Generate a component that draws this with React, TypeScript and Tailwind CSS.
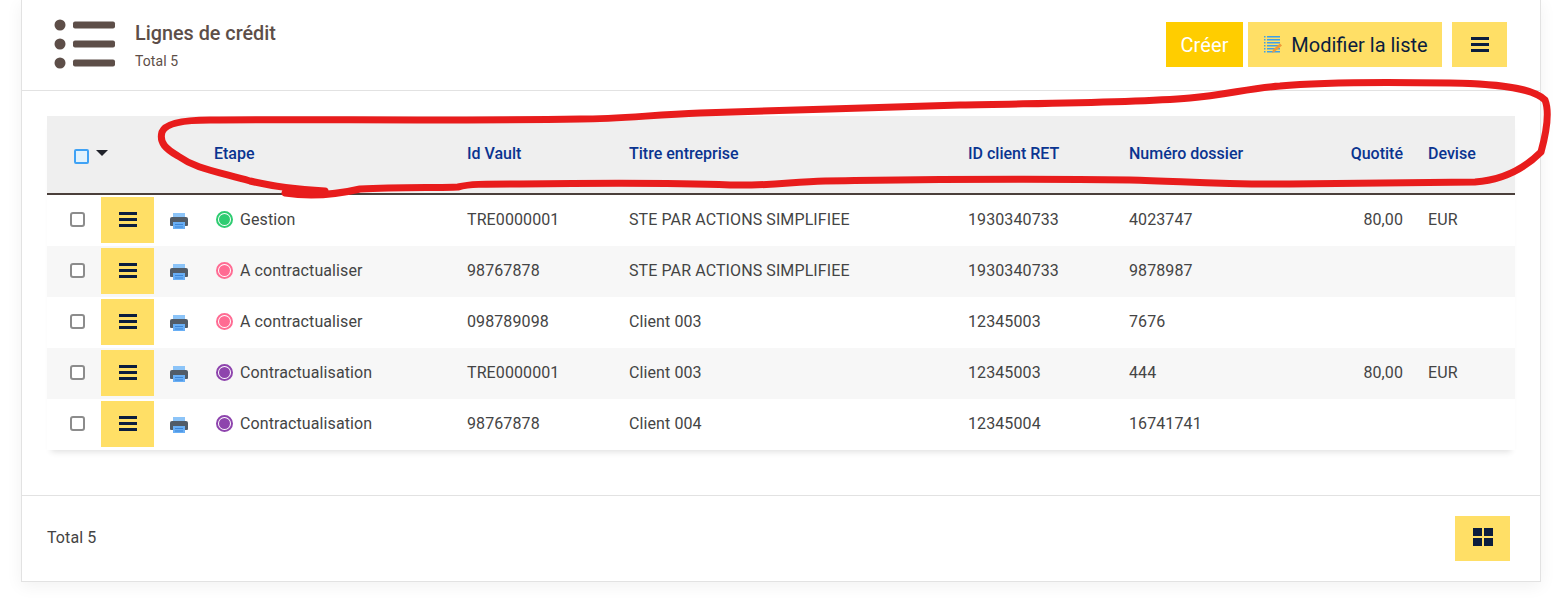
const rows = [
  { s: "Gestion", c: "#2ecc71", v: "TRE0000001", t: "STE PAR ACTIONS SIMPLIFIEE", i: "1930340733", n: "4023747", q: "80,00", d: "EUR" },
  { s: "A contractualiser", c: "#ff6b93", v: "98767878", t: "STE PAR ACTIONS SIMPLIFIEE", i: "1930340733", n: "9878987", q: "", d: "" },
  { s: "A contractualiser", c: "#ff6b93", v: "098789098", t: "Client 003", i: "12345003", n: "7676", q: "", d: "" },
  { s: "Contractualisation", c: "#8e44ad", v: "TRE0000001", t: "Client 003", i: "12345003", n: "444", q: "80,00", d: "EUR" },
  { s: "Contractualisation", c: "#8e44ad", v: "98767878", t: "Client 004", i: "12345004", n: "16741741", q: "", d: "" },
];

function Bars() {
  return (
    <svg width="18" height="15" viewBox="0 0 18 15" className="block">
      <rect x="0" y="0" width="18" height="3" fill="#0b1d3e" />
      <rect x="0" y="6" width="18" height="3" fill="#0b1d3e" />
      <rect x="0" y="12" width="18" height="3" fill="#0b1d3e" />
    </svg>
  );
}

function Printer() {
  return (
    <svg width="18" height="16" viewBox="0 0 18 16" className="block">
      <rect x="3" y="0" width="12" height="5" fill="#8cc4f8" />
      <path d="M2 4h14a2 2 0 0 1 2 2v6a1 1 0 0 1-1 1H1a1 1 0 0 1-1-1V6a2 2 0 0 1 2-2z" fill="#515c68" />
      <rect x="3" y="9" width="12" height="7" fill="#69aff5" />
      <rect x="5" y="11" width="8" height="1" fill="#3d86d8" />
      <rect x="5" y="13.5" width="8" height="1" fill="#3d86d8" />
    </svg>
  );
}

function Logo() {
  return (
    <svg width="62" height="50" viewBox="0 0 62 50" className="block">
      {[6, 25, 44].map((y) => (
        <g key={y}>
          <circle cx="6" cy={y} r="5.5" fill="#5d4e48" />
          <rect x="19" y={y - 3.5} width="42" height="7" rx="2" fill="#5d4e48" />
        </g>
      ))}
    </svg>
  );
}

function EditList() {
  return (
    <svg width="18" height="19" viewBox="0 0 18 19" className="block">
      {[1, 4, 7, 10, 13, 16].map((y) => (
        <g key={y}>
          <rect x="0" y={y} width="1.5" height="1.5" fill="#3fa0e8" />
          <rect x="3" y={y} width="13" height="1.5" fill="#3fa0e8" />
        </g>
      ))}
      <path d="M8 18l1-3.5 7-6 2 2-7 6z" fill="#f09a36" />
    </svg>
  );
}

function Status({ color }: { color: string }) {
  return (
    <span
      className="flex h-[17px] w-[17px] shrink-0 items-center justify-center rounded-full border-2 bg-white"
      style={{ borderColor: color }}
    >
      <span className="h-[11px] w-[11px] rounded-full" style={{ backgroundColor: color }} />
    </span>
  );
}

function Annotation() {
  return (
    <svg width="1553" height="200" viewBox="0 0 1553 200" className="pointer-events-none absolute left-0 top-0" fill="none">
      <path
        d="M285 193C305 196 330 196 360 189C400 187 440 188 458 187C470 184 480 184 520 184C600 183 680 183 730 185C770 186 790 182 825 181C900 180 1000 178 1130 180C1180 181 1220 185 1290 184C1360 183 1420 183 1475 182C1505 180 1525 168 1541 152C1547 130 1549 110 1545 100C1535 90 1510 84 1450 83C1390 82 1320 82 1280 86C1250 88 1225 95 1190 98C1130 103 1060 103 960 105C880 108 780 110 700 113C650 115 620 119 580 119C450 121 300 119 210 120C180 120 165 124 162 132C159 143 166 149 178 156C195 168 210 170 250 181C270 186 290 189 325 191"
        stroke="#e81c1c"
        strokeWidth="7"
        strokeLinecap="round"
        strokeLinejoin="round"
      />
    </svg>
  );
}

const th = "border-b-2 border-[#4a3f3b] pb-[1px] font-medium";

export default function App() {
  return (
    <div className="relative h-[600px] w-[1553px] overflow-hidden bg-white font-['Roboto',sans-serif] text-[16px] tracking-[0.1px] text-[#444444]">
      <div className="ml-[21px] w-[1520px] border-x border-b border-[#e2e2e2] shadow-[0_4px_16px_rgba(0,0,0,0.06)]">
        <header className="flex h-[91px] items-start justify-between border-b border-[#e2e2e2]">
          <div className="flex pl-[32px] pt-[19px]">
            <Logo />
            <div className="ml-[19px] pt-[2px]">
              <div className="text-[19.8px] font-medium leading-[26px] tracking-normal text-[#5d4e48]">Lignes de crédit</div>
              <div className="mt-[6px] text-[14px] leading-[16px] text-[#5d4e48]">Total 5</div>
            </div>
          </div>
          <div className="flex pr-[33px] pt-[22px]">
            <button className="h-[45px] w-[77px] bg-[#ffcd00] text-[20px] text-white">Créer</button>
            <button className="ml-[5px] flex h-[45px] w-[194px] items-center justify-center gap-[9px] bg-[#ffdf66] pl-[2px] text-[20px] tracking-normal text-[#0b1d3e]">
              <EditList />
              Modifier la liste
            </button>
            <button className="ml-[10px] flex h-[45px] w-[55px] items-center justify-center bg-[#ffdf66]">
              <Bars />
            </button>
          </div>
        </header>

        <div className="px-[25px] pt-[25px]">
          <div className="w-[1468px] shadow-[0_6px_6px_-4px_rgba(0,0,0,0.12)]">
            <table className="w-[1468px] table-fixed border-separate border-spacing-0">
              <colgroup>
                <col className="w-[54px]" />
                <col className="w-[53px]" />
                <col className="w-[50px]" />
                <col className="w-[253px]" />
                <col className="w-[162px]" />
                <col className="w-[339px]" />
                <col className="w-[161px]" />
                <col className="w-[181px]" />
                <col className="w-[118px]" />
                <col className="w-[97px]" />
              </colgroup>
              <thead>
                <tr className="h-[79px] bg-[#efefef] text-left tracking-normal text-[#0a3490]">
                  <th className={th}>
                    <div className="flex items-center pl-[27px] pt-[4px]">
                      <span className="h-[15px] w-[15px] shrink-0 rounded-[2px] border-2 border-[#3fa2f5] bg-[#e1f2fd]" />
                      <svg width="12" height="6" viewBox="0 0 12 6" className="mb-[6px] ml-[7px] block shrink-0">
                        <path d="M0 0h12L6 6z" fill="#20222a" />
                      </svg>
                    </div>
                  </th>
                  <th className={th} />
                  <th className={th} />
                  <th className={`${th} px-[10px]`}>Etape</th>
                  <th className={`${th} px-[10px]`}>Id Vault</th>
                  <th className={`${th} px-[10px]`}>Titre entreprise</th>
                  <th className={`${th} px-[10px]`}>ID client RET</th>
                  <th className={`${th} px-[10px]`}>Numéro dossier</th>
                  <th className={`${th} pr-[15px] text-right`}>Quotité</th>
                  <th className={`${th} px-[10px]`}>Devise</th>
                </tr>
              </thead>
              <tbody>
                {rows.map((r, idx) => (
                  <tr key={idx} className={`h-[51px] ${idx % 2 === 1 ? "bg-[#f7f7f7]" : "bg-white"}`}>
                    <td className="p-0 pb-[2px]">
                      <span className="ml-[23px] block h-[15px] w-[15px] rounded-[3px] border-2 border-[#8c8c8c] bg-white" />
                    </td>
                    <td className="p-0 pb-[2px]">
                      <button className="flex h-[46px] w-[53px] items-center justify-center bg-[#ffdf66]">
                        <Bars />
                      </button>
                    </td>
                    <td className="p-0 pb-[2px]">
                      <span className="ml-[16px] block pt-[3px]">
                        <Printer />
                      </span>
                    </td>
                    <td className="px-[10px] pb-[2px]">
                      <div className="flex items-center gap-[7px] pl-[2px]">
                        <Status color={r.c} />
                        <span>{r.s}</span>
                      </div>
                    </td>
                    <td className="px-[10px] pb-[2px]">{r.v}</td>
                    <td className="px-[10px] pb-[2px]">{r.t}</td>
                    <td className="px-[10px] pb-[2px]">{r.i}</td>
                    <td className="px-[10px] pb-[2px]">{r.n}</td>
                    <td className="pb-[2px] pr-[15px] text-right">{r.q}</td>
                    <td className="px-[10px] pb-[2px]">{r.d}</td>
                  </tr>
                ))}
              </tbody>
            </table>
          </div>
        </div>

        <footer className="mt-[45px] flex h-[86px] items-center justify-between border-t border-[#e2e2e2] pl-[25px] pr-[30px]">
          <span className="pb-[2px]">Total 5</span>
          <button className="flex h-[45px] w-[55px] items-center justify-center bg-[#ffdf66] pb-[3px]">
            <svg width="20" height="18" viewBox="0 0 20 18" className="block">
              <rect x="0" y="0" width="9" height="8" fill="#0b1d3e" />
              <rect x="11" y="0" width="9" height="8" fill="#0b1d3e" />
              <rect x="0" y="10" width="9" height="8" fill="#0b1d3e" />
              <rect x="11" y="10" width="9" height="8" fill="#0b1d3e" />
            </svg>
          </button>
        </footer>
      </div>
      <Annotation />
    </div>
  );
}
